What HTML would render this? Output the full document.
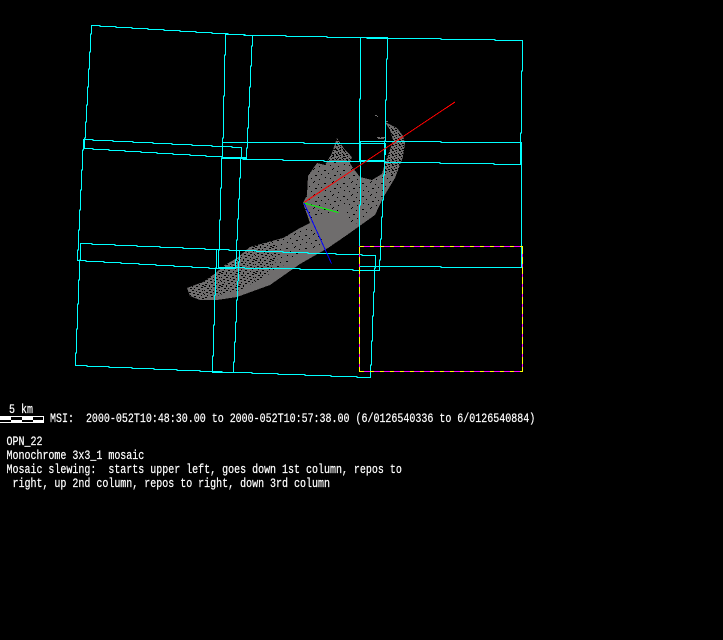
<!DOCTYPE html>
<html><head><meta charset="utf-8"><style>
html,body{margin:0;padding:0;background:#000;width:723px;height:640px;overflow:hidden}
svg{display:block}
.c{fill:none;stroke:#00ffff;stroke-width:1}
text{font-family:"Liberation Mono",monospace;font-size:13px;fill:#fff;stroke:#fff;stroke-width:.22px;white-space:pre}
</style></head><body>
<svg width="723" height="640" viewBox="0 0 723 640" xmlns="http://www.w3.org/2000/svg">
<defs>
<pattern id="p1" width="17" height="13" patternUnits="userSpaceOnUse"><path fill="#000" d="M0 0h2v1h-2zM5 0h1v1h-1zM9 0h2v1h-2zM14 1h2v1h-2zM3 2h2v1h-2zM7 2h1v1h-1zM11 3h2v1h-2zM0 4h1v1h-1zM5 4h2v1h-2zM15 4h1v1h-1zM9 5h1v1h-1zM2 6h2v1h-2zM12 6h2v1h-2zM6 7h2v1h-2zM16 7h1v1h-1zM0 8h1v1h-1zM10 8h2v1h-2zM3 9h1v1h-1zM14 9h1v1h-1zM7 10h2v1h-2zM1 11h2v1h-2zM12 11h1v1h-1zM5 12h1v1h-1zM15 12h2v1h-2z"/></pattern>
<pattern id="p2" width="19" height="13" patternUnits="userSpaceOnUse"><path fill="#000" d="M1 1h2v1h-2zM9 0h1v1h-1zM14 2h1v1h-1zM5 4h1v1h-1zM17 5h1v1h-1zM11 6h2v1h-2zM2 8h1v1h-1zM7 9h1v1h-1zM15 10h1v1h-1zM10 12h1v1h-1z"/></pattern>
<pattern id="p3" width="7" height="5" patternUnits="userSpaceOnUse"><path fill="#000" d="M0 0h2v1h-2zM4 1h1v1h-1zM2 2h1v1h-1zM6 3h1v1h-1zM0 4h1v1h-1zM3 4h2v1h-2z"/></pattern>
<clipPath id="cr"><polygon points="187,288 203,282 213,275 225,265 237,258 250,247 283,238 300,228 310,223 303,203 307,195 308,176 317,163 325,165 332,153 337,138 345,150 352,157 350,163 353,168 360,177 372,180 382,174 385,163 390,150 393,140 390,130 385,122 397,128 403,136 405,143 403,157 395,178 383,198 375,215 347,235 328,248 300,264 270,285 237,297 217,300 200,300 190,296"/></clipPath>
</defs>
<rect width="723" height="640" fill="#000"/>
<g shape-rendering="crispEdges">
<polygon fill="#6f6d6d" points="187,288 203,282 213,275 225,265 237,258 250,247 283,238 300,228 310,223 303,203 307,195 308,176 317,163 325,165 332,153 337,138 345,150 352,157 350,163 353,168 360,177 372,180 382,174 385,163 390,150 393,140 390,130 385,122 397,128 403,136 405,143 403,157 395,178 383,198 375,215 347,235 328,248 300,264 270,285 237,297 217,300 200,300 190,296"/>
<rect x="375" y="115" width="2" height="1" fill="#6f6d6d"/><rect x="377" y="116" width="1" height="1" fill="#6f6d6d"/>
<rect x="385" y="121" width="3" height="1" fill="#6f6d6d"/>
<rect x="377" y="137" width="8" height="2" fill="#6f6d6d"/>
<g clip-path="url(#cr)">
<polygon points="180,270 270,235 280,255 268,275 240,290 180,305" fill="url(#p1)"/>
<polygon points="270,235 305,222 325,243 300,255 268,275 280,255" fill="url(#p2)"/>
<polygon points="305,130 360,130 360,178 345,205 340,212 305,222" fill="url(#p2)"/>
<polygon points="328,135 350,135 352,160 328,160" fill="url(#p3)"/>
<polygon points="345,180 385,170 395,175 375,210 350,228 345,205" fill="url(#p2)"/>
<polygon points="385,125 410,125 405,165 392,175 384,170" fill="url(#p3)"/>
</g>
<polygon points="377,137 385,136 385,139 377,139" fill="url(#p3)"/>
</g>
<g class="c" shape-rendering="crispEdges">
<!-- left column -->
<path d="M91.5 25.5H100V26.5H116V27.5H132V28.5H148V29.5H164V30.5H180V31.5H196V32.5H212V33.5H228V34.5H244V35.5H252.5V46H251.5V66H250.5V87H249.5V107H248.5V128H247.5V148H246.5V158.5H238V157.5H222V156.5H206V155.5H190V154.5H173V153.5H157V152.5H141V151.5H125V150.5H109V149.5H93V148.5H84.5V138H85.5V122H86.5V105H87.5V87H88.5V69H89.5V52H90.5V34H91.5Z"/>
<path d="M83.5 139.5H93V140.5H113V141.5H133V142.5H153V143.5H172V144.5H192V145.5H212V146.5H232V147.5H241.5V158H240.5V178H239.5V199H238.5V219H237.5V240H236.5V260H235.5V268.5H209V267.5H192V266.5H174V265.5H156V264.5H139V263.5H121V262.5H104V261.5H86V260.5H77.5V250H78.5V230H79.5V210H80.5V190H81.5V170H82.5V150H83.5Z"/>
<path d="M80.5 243.5H92V244.5H115V245.5H137V246.5H160V247.5H183V248.5H205V249.5H229V250.5H239.5V262H238.5V281H237.5V300H236.5V322H235.5V342H234.5V362H233.5V372.5H222V371.5H200V370.5H177V369.5H154V368.5H132V367.5H109V366.5H87V365.5H75.5V353H76.5V329H77.5V304H78.5V280H79.5V260H80.5Z"/>
<!-- middle column -->
<path d="M225.5 34.5H245V35.5H286V36.5H327V37.5H387.5V59H386.5V100H385.5V141H384.5V161.5H324V160.5H283V159.5H243V158.5H222.5V138H223.5V96H224.5V55H225.5Z"/>
<path d="M222.5 142.5H304V143.5H385.5V147H384.5V175H383.5V200H382.5V217H381.5V239H380.5V260H379.5V270.5H353V269.5H300V268.5H245V267.5H218.5V250H219.5V220H220.5V188H221.5V158H222.5Z"/>
<path d="M216.5 249.5H229V250.5H256V251.5H283V252.5H308V253.5H336V254.5H362V255.5H375.5V268H374.5V292H373.5V316H372.5V341H371.5V365H370.5V377.5H357V376.5H331V375.5H305V374.5H278V373.5H252V372.5H212.5V356H213.5V325H214.5V295H215.5V268H216.5Z"/>
<!-- right column -->
<path d="M360.5 37.5H367V38.5H441V39.5H495V40.5H522.5V71H521.5V133H520.5V164.5H494V163.5H440V162.5H385V161.5H359.5V99H360.5Z"/>
<path d="M360.5 141.5H441V142.5H521.5V267.5H441V266.5H359.5V205H360.5Z"/>
</g>
<g shape-rendering="crispEdges">
<rect x="384" y="143" width="2" height="12" fill="#00ffff"/>
<rect x="83" y="139" width="2" height="10" fill="#00ffff"/>
<rect x="222" y="157" width="24" height="2" fill="#00ffff"/>
<rect x="360" y="160" width="25" height="2" fill="#00ffff"/>
<!-- dashed frame -->
<rect x="359.5" y="246.5" width="163" height="125" fill="none" stroke="#ff00ff"/>
<path d="M360 246.5H523M360 371.5H523" stroke="#ffff00" stroke-dasharray="4 6" fill="none"/>
<path d="M359.5 247V372M522.5 247V372" stroke="#ffff00" stroke-dasharray="7 3" fill="none"/>
</g>
<g shape-rendering="crispEdges">
<line x1="455" y1="102" x2="304" y2="202.5" stroke="#ff0000" stroke-width="1"/>
<line x1="304" y1="203" x2="338.5" y2="212.5" stroke="#00ff00" stroke-width="1"/>
<line x1="304" y1="203" x2="331.5" y2="263.5" stroke="#0000ff" stroke-width="1"/>
</g>
<g shape-rendering="crispEdges">
<rect x="0" y="416" width="44" height="1" fill="#fff"/>
<rect x="0" y="417" width="11" height="3" fill="#fff"/><rect x="22" y="417" width="11" height="3" fill="#fff"/>
<rect x="11" y="420" width="11" height="3" fill="#fff"/><rect x="33" y="420" width="11" height="3" fill="#fff"/>
<rect x="43" y="416" width="1" height="7" fill="#fff"/>
<rect x="0" y="422" width="44" height="1" fill="#fff"/>
</g>
<g>
<text transform="translate(9,413) scale(.769,1)">5 km</text>
<text transform="translate(50,422) scale(.769,1)">MSI:  2000-052T10:48:30.00 to 2000-052T10:57:38.00 (6/0126540336 to 6/0126540884)</text>
<text transform="translate(6.5,445) scale(.769,1)">OPN_22</text>
<text transform="translate(6.5,459) scale(.769,1)">Monochrome 3x3_1 mosaic</text>
<text transform="translate(6.5,473) scale(.769,1)">Mosaic slewing:  starts upper left, goes down 1st column, repos to</text>
<text transform="translate(6.5,487) scale(.769,1)"> right, up 2nd column, repos to right, down 3rd column</text>
</g>
</svg>
</body></html>
